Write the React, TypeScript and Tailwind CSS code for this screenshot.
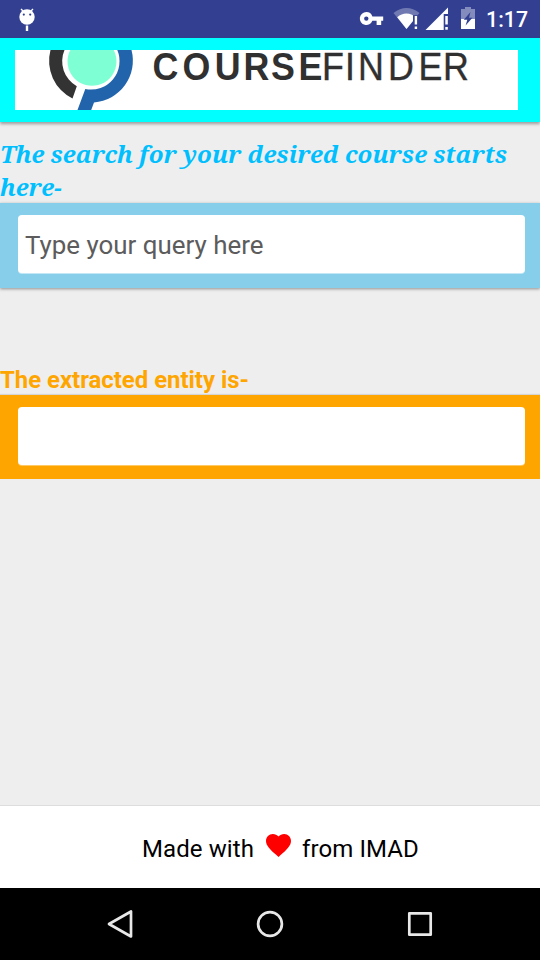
import React from 'react';

function StatusBar() {
  return (
    <header className="h-[38px] shrink-0 bg-[#334091]">
      <svg width="540" height="38" viewBox="0 0 540 38" className="block">
        <g fill="#fff">
          <circle cx="27" cy="17" r="7.7" />
          <path d="M21 9l4 4M33 9l-4 4" stroke="#fff" strokeWidth="1.4" />
          <rect x="25.8" y="25.5" width="2.4" height="5.5" />
          <circle cx="23.8" cy="14.6" r="1.1" fill="#334091" />
          <circle cx="30.2" cy="14.6" r="1.1" fill="#334091" />
          <path fillRule="evenodd" d="M366.3 12a6.5 6.5 0 1 0 6.1 8.8h4.2V25h4.6v-4.2h2V16.400h-10.800A6.500 6.500 0 0 0 366.300 12zm0 4.400a2.200 2.200 0 1 1 0 4.400a2.200 2.200 0 0 1 0-4.400z" />
          <path d="M393.500 13Q406.500 3 419.500 13L417.500 15.300H413V21L406.500 29Z" opacity=".3" />
          <path d="M397.200 17.200Q404 11.500 412 14.800L413 15.500V21L406.500 29Z" />
          <rect x="414.700" y="16" width="2.400" height="8.500" /><rect x="414.700" y="26.500" width="2.400" height="2.500" />
          <path d="M425.500 30L448 7.500V14H443.700V30Z" />
          <rect x="445.300" y="16" width="2.500" height="8.500" /><rect x="445.300" y="27" width="2.500" height="2.700" />
          <path d="M461 9h4V7h6v2h4v10h-14z" opacity=".4" />
          <path d="M461 19h14v10h-14z" />
          <path d="M470.500 12L463.800 19.800H467.300L465.600 25.600L472.400 17.800H469Z" fill="#334091" />
        </g>
        <text x="486" y="27" textLength="42" fill="#fff" fontSize="21.300" fontWeight="500" fontFamily="Roboto, sans-serif">1:17</text>
      </svg>
    </header>
  );
}

function Logo() {
  return (
    <svg width="503" height="60" viewBox="15 50 503 60" className="block overflow-visible bg-white" fontFamily="'Liberation Sans', Arial, sans-serif">
      <path d="M50.500 50A42 42 0 0 0 72.500 98.500L76.800 86.200A28.500 28.500 0 0 1 64.500 50Z" fill="#333" />
      <path d="M117.300 50A28.500 28.500 0 0 1 85.300 89L77.500 110H91.200L94 102.500A42 42 0 0 0 131.500 50Z" fill="#2264ac" />
      <path d="M70.300 50A24.500 24.500 0 1 0 113.700 50Z" fill="#7fffd4" />
      <g transform="scale(.93 1)" fill="#303030" fontSize="38.500">
        <text y="80.500" x="163.900 196.200 230.800 261.900 291.400 321.100" fontWeight="700">COURSE</text>
        <text y="80.500" x="346.300 371 385 417.200 450 476.300" stroke="#303030" strokeWidth=".4">FINDER</text>
      </g>
    </svg>
  );
}

export default function App() {
  return (
    <div className="flex h-[960px] w-[540px] flex-col overflow-hidden bg-[#eeeeee] font-['Roboto',sans-serif]">
      <StatusBar />
      <section className="h-[84px] shrink-0 bg-[#00ffff] px-[15px] pt-3 shadow-[0_2px_3px_rgba(0,0,0,0.35)]">
        <Logo />
      </section>
      <h1 className="mt-[15px] h-[66px] shrink-0 whitespace-nowrap font-['Noto_Serif','Droid_Serif','DejaVu_Serif',serif] text-[24px] leading-[33px] font-bold text-[#00bfff] italic">
        The search for your desired course starts<br />here-
      </h1>
      <section className="h-[85px] shrink-0 bg-[#87ceeb] pt-3 pr-[15px] pl-[18px] shadow-[0_1px_3px_rgba(0,0,0,0.4)]">
        <input className="block h-[58px] w-full rounded-[4px] bg-white px-[7px] pt-[2px] text-[25.9px] shadow-[0_1px_0_rgba(255,255,255,0.5)] placeholder:text-[#5c5c5c] placeholder:opacity-100" placeholder="Type your query here" />
      </section>
      <h2 className="mt-[77px] h-[30px] shrink-0 text-[23.9px] leading-[30px] font-bold text-[#ffa500]">The extracted entity is-</h2>
      <section className="h-[84px] shrink-0 bg-[#ffa500] pt-3 pr-[15px] pl-[18px] shadow-[0_-1px_1px_rgba(0,0,0,0.1)]">
        <div className="h-[58px] rounded-[4px] bg-white shadow-[0_1px_0_rgba(255,255,255,0.4)]" />
      </section>
      <div className="flex-1" />
      <footer className="flex h-[83px] shrink-0 border-t border-[#dddddd] bg-white pt-[27px] pl-[142px] text-[24px] leading-[32px] whitespace-nowrap text-black">
        <span className="w-[112px] tracking-[0.1px]">Made with</span>
        <svg width="25" height="23" viewBox="2 3 20 18.350" preserveAspectRatio="none" className="mt-[1px] mr-[11px] ml-[12px] block" fill="#f00">
          <path d="M12 21.350l-1.450-1.320C5.400 15.360 2 12.280 2 8.500 2 5.420 4.420 3 7.500 3c1.740 0 3.410.81 4.500 2.090C13.090 3.810 14.760 3 16.500 3 19.580 3 22 5.420 22 8.500c0 3.780-3.400 6.860-8.550 11.540L12 21.350z" />
        </svg>
        <span className="tracking-[0.1px]">from IMAD</span>
      </footer>
      <nav className="h-[72px] shrink-0 bg-black">
        <svg width="540" height="72" viewBox="0 888 540 72" className="block" fill="none" stroke="#e8e8e8" strokeWidth="2.700" strokeLinejoin="round">
          <path d="M131 911.500V936.500L109 924Z" />
          <circle cx="270" cy="924" r="11.900" />
          <rect x="409.300" y="913.300" width="21.400" height="21.400" />
        </svg>
      </nav>
    </div>
  );
}
